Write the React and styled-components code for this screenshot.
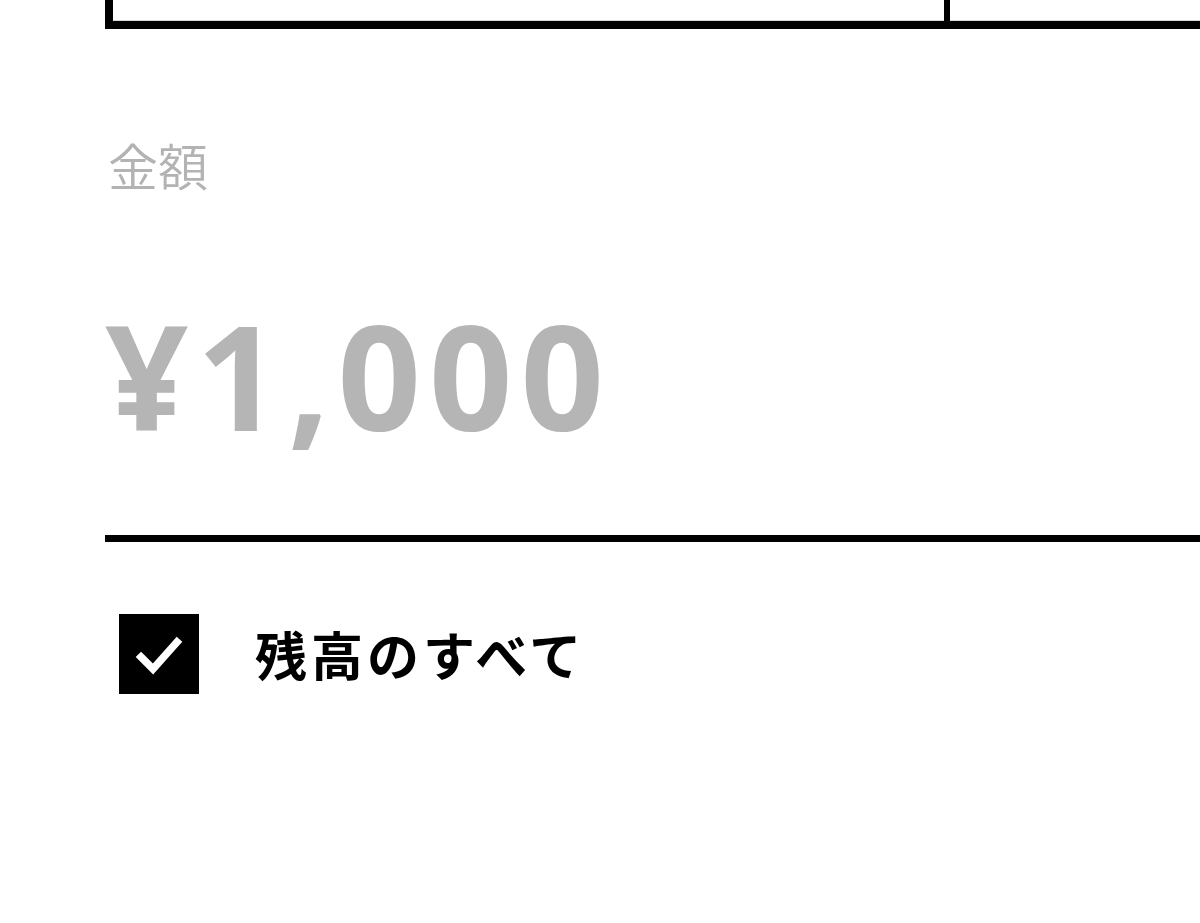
import styled, { createGlobalStyle } from "styled-components";

const GlobalStyle = createGlobalStyle`
  html, body {
    margin: 0;
    padding: 0;
    background: #ffffff;
  }
  body {
    font-family: "Noto Sans CJK JP", "Noto Sans", sans-serif;
    overflow: hidden;
  }
`;

// 画面全体（右側ははみ出して切れる）
const Page = styled.div`
  width: 1200px;
  height: 923px;
  overflow: hidden;
  padding-left: 105px;
  box-sizing: border-box;
`;

// 上部の選択ボックス（上端は画面外）
const TabRow = styled.div`
  display: flex;
  width: calc(100% + 40px);
  height: 21px;
  border-left: 8px solid #000;
  border-bottom: 8px solid #000;
`;

const TabCell = styled.div`
  flex: ${(props) => (props.$grow ? 1 : "0 0 auto")};
  width: ${(props) => (props.$width ? `${props.$width}px` : "auto")};
  border-right: ${(props) => (props.$divider ? "6px solid #000" : "none")};
  box-shadow: inset 0 -1px 0 #d8d8d8;
`;

const AmountSection = styled.section`
  display: flex;
  flex-direction: column;
  padding-top: 110px;
  width: calc(100% + 40px);
`;

const Label = styled.div`
  font-size: 50px;
  font-weight: 350;
  line-height: 1;
  color: #b3b3b3;
  padding-left: 3px;
`;

const AmountInput = styled.div`
  margin-top: 113px;
  font-family: "Open Sans", "Noto Sans", sans-serif;
  font-size: 146px;
  font-weight: 700;
  line-height: 1;
  color: #b5b5b5;
  letter-spacing: 8px;
  padding-bottom: 87px;
  border-bottom: 7px solid #000;
`;

const CheckRow = styled.label`
  display: flex;
  align-items: center;
  gap: 56px;
  margin-top: 72px;
  padding-left: 14px;
`;

const CheckBox = styled.span`
  display: flex;
  align-items: center;
  justify-content: center;
  width: 80px;
  height: 80px;
  background: #000;
`;

const CheckLabel = styled.span`
  font-size: 52px;
  font-weight: 700;
  line-height: 1;
  letter-spacing: 4px;
  color: #000;
`;

export default function App() {
  return (
    <>
      <GlobalStyle />
      <Page>
        <TabRow>
          <TabCell $width={831} $divider />
          <TabCell $grow />
        </TabRow>
        <AmountSection>
          <Label>金額</Label>
          <AmountInput>¥1,000</AmountInput>
        </AmountSection>
        <CheckRow>
          <CheckBox>
            <svg width="52" height="52" viewBox="0 0 52 52">
              <path
                d="M8 29 L20 41 L44 14"
                fill="none"
                stroke="#fff"
                strokeWidth="7.5"
                strokeLinecap="square"
              />
            </svg>
          </CheckBox>
          <CheckLabel>残高のすべて</CheckLabel>
        </CheckRow>
      </Page>
    </>
  );
}
